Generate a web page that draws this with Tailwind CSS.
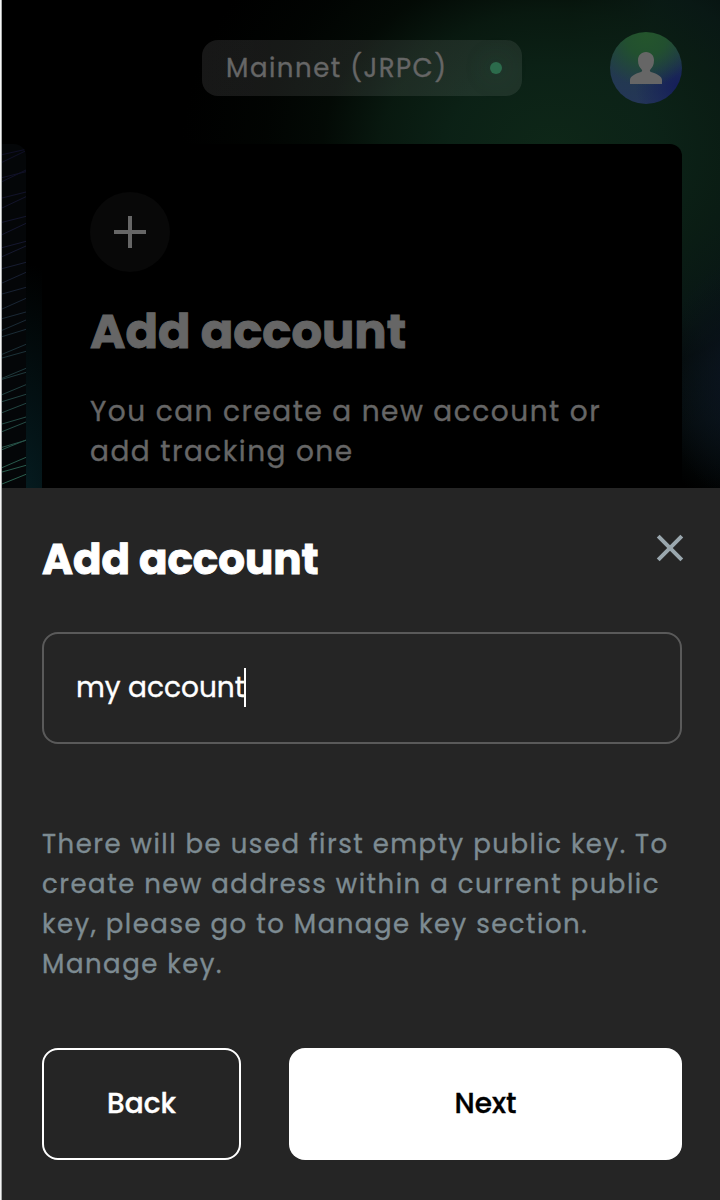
<!DOCTYPE html>
<html lang="en">
<head>
<meta charset="utf-8">
<title>Add account</title>
<script src="https://cdn.jsdelivr.net/npm/@tailwindcss/browser@4"></script>
</head>
<body class="w-[720px] h-[1200px] overflow-hidden bg-[#252525] font-['Poppins','Inter',sans-serif]">
<div class="flex h-[1200px] w-[720px]">
  <div class="w-0.5 shrink-0 border-l border-[#f4f5f5] bg-[#a9abab]"></div>
  <div class="flex w-[718px] flex-col">
    <section class="h-[488px] overflow-hidden bg-black bg-[radial-gradient(ellipse_120px_260px_at_10px_520px,#061e22_0%,#051a1e_20%,transparent_100%),radial-gradient(ellipse_80px_120px_at_740px_380px,#0b1320_0%,transparent_100%),radial-gradient(ellipse_370px_300px_at_550px_150px,#0e2718_0%,#0c2317f0_28%,#0a1d12d8_46%,#06130a80_62%,#020603a0_78%,transparent_100%),radial-gradient(ellipse_190px_380px_at_750px_130px,#0c1d20_0%,#0c1d1e_60%,transparent_100%)]">
      <header class="flex h-36 items-center pr-[38px] pb-2 pl-[200px]">
        <div class="flex h-14 w-80 items-center justify-between rounded-2xl bg-[linear-gradient(90deg,#ffffff17,#ffffff15)] pr-5 pl-6 text-[#666]">
          <span class="text-[26px] leading-none tracking-[1.5px] whitespace-nowrap [-webkit-text-stroke:0.35px]">Mainnet (JRPC)</span>
          <span class="size-3 rounded-full bg-[#2c6b4c] shadow-[0_0_24px_4px_#2c6b4c30]"></span>
        </div>
        <div class="ml-auto flex size-[72px] items-center justify-center rounded-full bg-[radial-gradient(circle_at_50%_5%,#24552c_0%,#22502f_26%,transparent_66%),radial-gradient(circle_at_95%_75%,#151e5a_0%,transparent_50%),linear-gradient(#203c45,#243657)]">
          <svg class="h-8 w-8" viewBox="0 0 32 32" fill="#666"><path d="M16 0C21 0 24 3.6 24 8.3C24 13 22.3 15.700 20.400 17.400C19.500 18.600 19.800 19.400 21 20C27.500 22 32 24.500 32 28V32H0V28C0 24.500 4.500 22 11 20C12.200 19.400 12.500 18.600 11.600 17.400C9.700 15.700 8 13 8 8.300C8 3.600 11 0 16 0Z"/></svg>
        </div>
      </header>
      <div class="flex gap-4">
        <div class="h-[344px] w-6 overflow-hidden rounded-tr-xl bg-[#040608]">
          <svg class="h-[344px] w-6" viewBox="6 42 72 1032" fill="none" stroke="url(#wave)" stroke-width="3">
            <defs><linearGradient id="wave" gradientUnits="userSpaceOnUse" x1="0" y1="42" x2="0" y2="1074"><stop stop-color="#0e0e25"/><stop offset=".3" stop-color="#15172f"/><stop offset=".6" stop-color="#1b3037"/><stop offset="1" stop-color="#2b6350"/></linearGradient></defs>
            <path d="M6 74L78 58M6 97L78 62M6 143L78 125M6 155L78 120M6 204L78 186M6 234L78 200M6 277L78 259M6 314L78 280M6 353L78 334M6 380L78 348M6 416L78 397M6 459L78 427M6 492L78 472M6 537L78 505M6 566L78 546M6 601L78 570M6 620L78 598M6 673L78 643M6 684L78 664M6 745L78 715M6 748L78 727M6 794L78 764M6 815L78 793M6 848L78 820M6 882L78 861M6 905L78 876M6 952L78 931M6 959L78 930M6 1013L78 982M6 1026L78 1006M6 1062L78 1033"/>
          </svg>
        </div>
        <div class="h-[344px] w-[640px] rounded-t-xl bg-black p-12 text-[#666]">
          <div class="flex size-20 items-center justify-center rounded-full bg-[#080808]">
            <svg class="size-8" viewBox="0 0 32 32" stroke="#666" stroke-width="4"><path d="M0 16H32M16 0V32"/></svg>
          </div>
          <h2 class="mt-[31px] text-[48px] leading-[58px] font-bold whitespace-nowrap [-webkit-text-stroke:0.9px]">Add account</h2>
          <p class="mt-[31px] text-[28px] leading-10 tracking-[1.5px] whitespace-nowrap [-webkit-text-stroke:0.35px]">You can create a new account or<br>add tracking one</p>
        </div>
      </div>
    </section>
    <section class="flex h-[712px] flex-col bg-[#252525] pr-[38px] pl-10">
      <div class="flex h-36 items-start justify-between pt-[46px]">
        <h1 class="mt-px text-[42px] leading-[50px] font-bold whitespace-nowrap text-white [-webkit-text-stroke:0.9px]">Add account</h1>
        <svg class="-mr-0.5 h-7 w-7" viewBox="0 0 28 28" fill="none" stroke="#9aa7ae" stroke-width="4"><path d="M2.200 2.200L25.800 25.800M25.800 2.200L2.200 25.800"/></svg>
      </div>
      <div class="flex h-28 items-center rounded-2xl border-2 border-[#5a5a5a] pl-8">
        <span class="text-[28px] whitespace-nowrap text-white [-webkit-text-stroke:0.35px]">my account</span>
        <span class="-mt-0.5 -ml-px h-[39px] w-0.5 bg-white"></span>
      </div>
      <p class="mt-20 text-[26px] leading-10 tracking-[1.5px] whitespace-nowrap text-[#7d8b92] [-webkit-text-stroke:0.35px]">There will be used first empty public key. To<br>create new address within a current public<br>key, please go to Manage key section.<br>Manage key.</p>
      <div class="mt-16 flex gap-12">
        <button class="h-28 w-[199px] rounded-2xl border-2 border-white text-[28px] font-medium text-white [-webkit-text-stroke:0.35px]">Back</button>
        <button class="h-28 flex-1 rounded-2xl bg-white text-[28px] font-medium text-black [-webkit-text-stroke:0.35px]">Next</button>
      </div>
    </section>
  </div>
</div>
</body>
</html>
